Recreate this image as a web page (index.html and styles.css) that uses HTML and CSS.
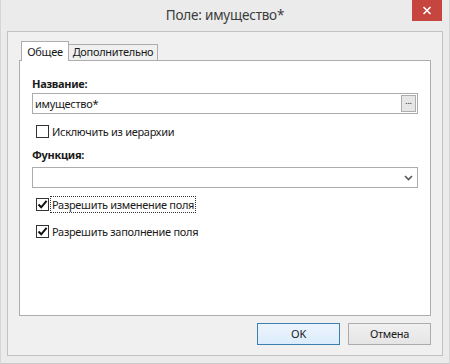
FILE: index.html
```html
<!DOCTYPE html>
<html lang="ru">
<head>
    <meta charset="UTF-8">
    <title>Поле: имущество*</title>
    <link rel="stylesheet" href="styles.css">
</head>
<body>
    <div class="window">
        <div class="titlebar">
            <span class="title">Поле: имущество*</span>
            <div class="close-btn">
                <svg width="10" height="9" viewBox="0 0 10 9"><path d="M1.5 1 L8.5 8 M8.5 1 L1.5 8" stroke="#fff" stroke-width="1.6"/></svg>
            </div>
        </div>
        <div class="client">
            <div class="tabs">
                <div class="tab active">Общее</div>
                <div class="tab">Дополнительно</div>
            </div>
            <div class="panel">
                <div class="label">Название:</div>
                <div class="field">
                    <span class="field-text">имущество*</span>
                    <span class="dots-btn">...</span>
                </div>
                <div class="check-row first">
                    <span class="checkbox"></span>
                    <span class="check-label">Исключить из иерархии</span>
                </div>
                <div class="label label-func">Функция:</div>
                <div class="field combo">
                    <span class="field-text"></span>
                    <svg class="arrow" width="9" height="6" viewBox="0 0 9 6"><path d="M1 1 L4.5 4.5 L8 1" stroke="#555" stroke-width="1.6" fill="none"/></svg>
                </div>
                <div class="check-row second">
                    <span class="checkbox"><svg width="11" height="11" viewBox="0 0 11 11"><path d="M1.5 5.5 L4.2 8.3 L9.6 1.8" stroke="#111" stroke-width="2" fill="none"/></svg></span>
                    <span class="check-label focused">Разрешить изменение поля</span>
                </div>
                <div class="check-row third">
                    <span class="checkbox"><svg width="11" height="11" viewBox="0 0 11 11"><path d="M1.5 5.5 L4.2 8.3 L9.6 1.8" stroke="#111" stroke-width="2" fill="none"/></svg></span>
                    <span class="check-label">Разрешить заполнение поля</span>
                </div>
            </div>
            <div class="buttons">
                <div class="btn default">OK</div>
                <div class="btn">Отмена</div>
            </div>
        </div>
    </div>
</body>
</html>
```

FILE: styles.css
```css
* {
    box-sizing: border-box;
}
body {
    margin: 0;
    font-family: "Noto Sans", "Open Sans", sans-serif;
    font-size: 11px;
    letter-spacing: -0.3px;
    color: #1a1a1a;
    background: #ececec;
}
.window {
    width: 450px;
    height: 364px;
    display: flex;
    flex-direction: column;
    padding: 0 6px 7px 6px;
    background: #ebebeb;
    border-left: 1px solid #d6d6d6;
    border-right: 1px solid #d6d6d6;
    border-bottom: 1px solid #cacaca;
}
.titlebar {
    height: 31px;
    position: relative;
    display: flex;
    align-items: center;
    justify-content: center;
}
.title {
    font-size: 13.5px;
    letter-spacing: -0.2px;
    color: #3c3c3c;
    margin-top: -1px;
}
.close-btn {
    position: absolute;
    top: 0;
    right: 1px;
    width: 30px;
    height: 21px;
    background: #c7453f;
    display: flex;
    align-items: center;
    justify-content: center;
}
.client {
    flex: 1;
    background: #f0f0f0;
    border: 1px solid #c2c2c2;
    padding: 9px 11px 0 11px;
    display: flex;
    flex-direction: column;
}
.tabs {
    display: flex;
    align-items: flex-end;
    height: 20px;
    padding-left: 2px;
    position: relative;
    z-index: 1;
    margin-bottom: -1px;
}
.tab {
    width: 89px;
    height: 16px;
    margin-bottom: 1px;
    line-height: 14px;
    text-align: center;
    border: 1px solid #adadad;
    border-bottom: none;
    border-left: none;
    background: #f0f0f0;
}
.tab.active {
    width: 48px;
    height: 20px;
    margin-bottom: 0;
    line-height: 19px;
    background: #fff;
    border-left: 1px solid #adadad;
}
.panel {
    height: 256px;
    background: #fff;
    border: 1px solid #adadad;
    padding: 14px 12px 0 12px;
}
.label {
    font-weight: bold;
    height: 18px;
    line-height: 18px;
}
.label-func {
    margin-top: 6px;
    margin-bottom: 3px;
}
.field {
    height: 21px;
    border: 1px solid #acacac;
    display: flex;
    align-items: center;
    justify-content: space-between;
    padding: 0 1px 0 2px;
}
.dots-btn {
    width: 15px;
    height: 17px;
    background: #e6e6e6;
    border: 1px solid #adadad;
    font-size: 9px;
    line-height: 10px;
    text-align: center;
}
.combo {
    padding-right: 4px;
}
.check-row {
    display: flex;
    align-items: center;
    padding-left: 4px;
    height: 17px;
}
.check-row.first {
    margin-top: 9px;
}
.check-row.second {
    margin-top: 8px;
}
.check-row.third {
    margin-top: 10px;
}
.checkbox {
    width: 13px;
    height: 13px;
    border: 1px solid #333;
    background: #fff;
    display: flex;
    align-items: center;
    justify-content: center;
}
.check-label {
    margin-left: 1px;
    padding: 0 1px;
    line-height: 15px;
    border: 1px dotted transparent;
}
.check-label.focused {
    border-color: #333;
}
.buttons {
    display: flex;
    justify-content: flex-end;
    gap: 8px;
    margin-top: 7px;
}
.btn {
    width: 83px;
    height: 22px;
    line-height: 20px;
    text-align: center;
    border: 1px solid #acacac;
    background: linear-gradient(#f0f0f0, #e5e5e5);
}
.btn.default {
    border-color: #3c7fb1;
    background: linear-gradient(#ecf4fc, #dcecfc);
}
```
